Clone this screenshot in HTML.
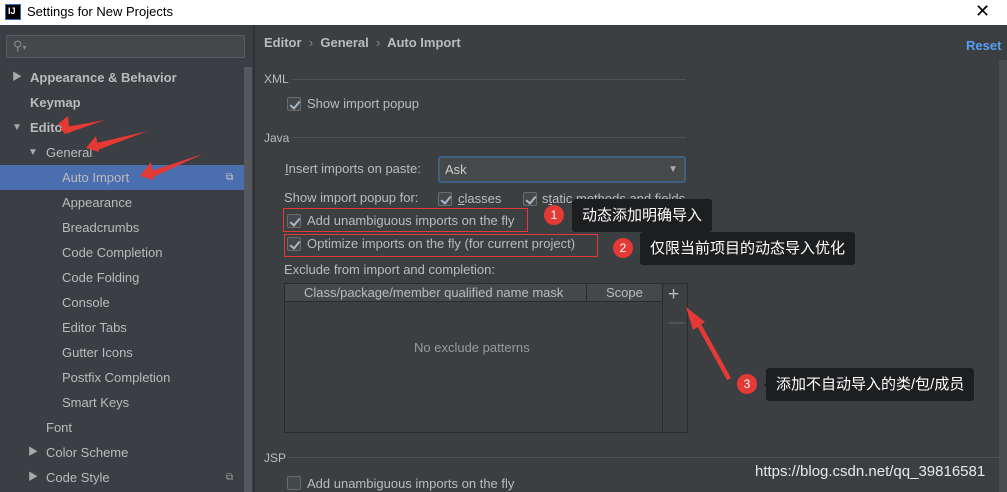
<!DOCTYPE html>
<html><head><meta charset="utf-8"><style>
*{margin:0;padding:0;box-sizing:border-box}
body{width:1007px;height:492px;overflow:hidden;background:#3c3f41;font-family:"Liberation Sans","Noto Sans CJK SC",sans-serif;font-size:13px;color:#bbbbbb;position:relative}
.a{position:absolute;white-space:nowrap}
.title{left:0;top:0;width:1007px;height:25px;background:#fff;color:#000;font-size:13px}
.side{left:0;top:25px;width:253px;height:467px;background:#3b3e43}
.row{position:absolute;left:0;width:244px;height:25px;line-height:25px}
.tri{position:absolute;font-size:10px;color:#aaa}
.cb{position:absolute;width:14px;height:14px;border:1px solid #6b6b6b;background:#43494a;border-radius:2px}
.cb.on::after{content:"";position:absolute;left:4px;top:1px;width:4px;height:8px;border:solid #a9b7c6;border-width:0 2px 2px 0;transform:rotate(40deg)}
.tip{background:#1d1e20;color:#fff;font-size:15px;border-radius:3px;height:33px;line-height:33px;padding:0 10px}
.num{width:20px;height:20px;border-radius:50%;background:#e53935;color:#fff;font-size:12px;text-align:center;line-height:20px}
.sep{height:1px;background:#4f5254}
</style></head><body>
<div class="a title">
 <div class="a" style="left:5px;top:4px;width:16px;height:16px;background:#000;border:1px solid #2f6fc0;color:#fff;font-size:9px;font-weight:bold;line-height:12px;padding-left:2px">IJ</div>
 <div class="a" style="left:27px;top:4px">Settings for New Projects</div>
 <div class="a" style="left:975px;top:1px;font-size:18px">✕</div>
</div>
<div class="a side">
 <div class="a" style="left:6px;top:10px;width:239px;height:23px;border:1px solid #5a5d60;border-radius:2px;background:#45484a;color:#888;padding-left:6px;line-height:20px">⚲<span style="font-size:8px">▾</span></div>
 <div class="a" style="left:244px;top:42px;width:8px;height:425px;background:#55585c"></div>
 <div class="row" style="top:40px"><span class="tri" style="left:12px">▶</span><b style="position:absolute;left:30px">Appearance &amp; Behavior</b></div>
 <div class="row" style="top:65px"><b style="position:absolute;left:30px">Keymap</b></div>
 <div class="row" style="top:90px"><span class="tri" style="left:12px">▼</span><b style="position:absolute;left:30px">Editor</b></div>
 <div class="row" style="top:115px"><span class="tri" style="left:28px">▼</span><span style="position:absolute;left:46px">General</span></div>
 <div class="row" style="top:140px;background:#4b6eaf;width:244px"><span style="position:absolute;left:62px">Auto Import</span><span style="position:absolute;left:226px;font-size:10px;color:#ccc">⧉</span></div>
 <div class="row" style="top:165px"><span style="position:absolute;left:62px">Appearance</span></div>
 <div class="row" style="top:190px"><span style="position:absolute;left:62px">Breadcrumbs</span></div>
 <div class="row" style="top:215px"><span style="position:absolute;left:62px">Code Completion</span></div>
 <div class="row" style="top:240px"><span style="position:absolute;left:62px">Code Folding</span></div>
 <div class="row" style="top:265px"><span style="position:absolute;left:62px">Console</span></div>
 <div class="row" style="top:290px"><span style="position:absolute;left:62px">Editor Tabs</span></div>
 <div class="row" style="top:315px"><span style="position:absolute;left:62px">Gutter Icons</span></div>
 <div class="row" style="top:340px"><span style="position:absolute;left:62px">Postfix Completion</span></div>
 <div class="row" style="top:365px"><span style="position:absolute;left:62px">Smart Keys</span></div>
 <div class="row" style="top:390px"><span style="position:absolute;left:46px">Font</span></div>
 <div class="row" style="top:415px"><span class="tri" style="left:28px">▶</span><span style="position:absolute;left:46px">Color Scheme</span></div>
 <div class="row" style="top:440px"><span class="tri" style="left:28px">▶</span><span style="position:absolute;left:46px">Code Style</span><span style="position:absolute;left:226px;font-size:10px;color:#999">⧉</span></div>
</div>
<div class="a" style="left:253px;top:25px;width:2px;height:467px;background:#2f3133"></div>
<div class="a" style="left:264px;top:35px;font-weight:bold;color:#bbb">Editor <span style="font-weight:normal;color:#888">&nbsp;›&nbsp;</span> General <span style="font-weight:normal;color:#888">&nbsp;›&nbsp;</span> Auto Import</div>
<div class="a" style="left:966px;top:38px;font-weight:bold;color:#589df6">Reset</div>
<div class="a" style="left:999px;top:60px;width:8px;height:432px;background:#4a4d50"></div>
<div class="a" style="left:264px;top:72px;font-size:12px">XML</div><div class="a sep" style="left:292px;top:79px;width:394px"></div>
<div class="cb on" style="left:287px;top:97px"></div><div class="a" style="left:307px;top:96px">Show import popup</div>
<div class="a" style="left:264px;top:131px;font-size:12px">Java</div><div class="a sep" style="left:292px;top:137px;width:394px"></div>
<div class="a" style="left:285px;top:161px"><u>I</u>nsert imports on paste:</div>
<div class="a" style="left:438px;top:156px;width:248px;height:27px;border:2px solid #3d6185;border-radius:3px;background:#45494a;padding-left:5px;line-height:23px;color:#ccc">Ask<span style="position:absolute;right:6px;font-size:10px;color:#aaa">▼</span></div>
<div class="a" style="left:284px;top:190px">Show import popup for:</div>
<div class="cb on" style="left:438px;top:192px"></div><div class="a" style="left:458px;top:191px"><u>c</u>lasses</div>
<div class="cb on" style="left:523px;top:192px"></div><div class="a" style="left:542px;top:191px">s<u>t</u>atic methods and fields</div>
<div class="a" style="left:283px;top:208px;width:245px;height:24px;border:1px solid #e53935"></div>
<div class="cb on" style="left:287px;top:214px"></div><div class="a" style="left:307px;top:213px">Add unambiguous imports on the fly</div>
<div class="a" style="left:284px;top:234px;width:314px;height:23px;border:1px solid #e53935"></div>
<div class="cb on" style="left:287px;top:237px"></div><div class="a" style="left:307px;top:236px">Optimize imports on the fly (for current project)</div>
<div class="a" style="left:284px;top:262px">Exclude from import and completion:</div>
<div class="a" style="left:284px;top:283px;width:379px;height:150px;border:1px solid #2b2b2b;background:#3c3f41"></div>
<div class="a" style="left:285px;top:284px;width:377px;height:18px;background:#45484a;border-bottom:1px solid #2b2b2b"></div>
<div class="a" style="left:304px;top:285px">Class/package/member qualified name mask</div>
<div class="a" style="left:586px;top:284px;width:1px;height:18px;background:#2b2b2b"></div>
<div class="a" style="left:606px;top:285px">Scope</div>
<div class="a" style="left:414px;top:340px;color:#999">No exclude patterns</div>
<div class="a" style="left:662px;top:283px;width:26px;height:150px;border:1px solid #2b2b2b;border-left:none"></div>
<div class="a" style="left:668px;top:284px;font-size:19px;color:#bbb">+</div>
<div class="a" style="left:669px;top:314px;font-size:16px;color:#666">—</div>
<div class="a" style="left:264px;top:451px;font-size:12px">JSP</div><div class="a sep" style="left:288px;top:457px;width:711px"></div>
<div class="cb" style="left:287px;top:476px"></div><div class="a" style="left:307px;top:476px">Add unambiguous imports on the fly</div>
<!-- annotations -->
<svg class="a" style="left:0;top:0" width="1007" height="492">
 <g fill="#e53935">
  <polygon points="105,120 60,128 65,134"/><polygon points="58,124 68,116 70,134"/>
  <polygon points="148,131 92,144 95,151"/><polygon points="86,148 96,136 99,152"/>
  <polygon points="203,154 148,172 151,178"/><polygon points="140,176 151,162 154,180"/>
  <polygon points="731,378 700,322 696,324 727,380"/><polygon points="686,307 705,322 693,330"/>
 </g>
</svg>
<div class="a num" style="left:544px;top:205px">1</div>
<div class="a" style="left:566px;top:210px;width:0;height:0;border:6px solid transparent;border-right-color:#1d1e20"></div>
<div class="a tip" style="left:572px;top:199px">动态添加明确导入</div>
<div class="a num" style="left:613px;top:238px">2</div>
<div class="a" style="left:634px;top:243px;width:0;height:0;border:6px solid transparent;border-right-color:#1d1e20"></div>
<div class="a tip" style="left:640px;top:232px">仅限当前项目的动态导入优化</div>
<div class="a num" style="left:737px;top:374px">3</div>
<div class="a" style="left:758px;top:379px;width:0;height:0;border:6px solid transparent;border-right-color:#1d1e20"></div>
<div class="a tip" style="left:766px;top:368px">添加不自动导入的类/包/成员</div>
<div class="a" style="left:755px;top:463px;font-size:15px;color:#e8e8e8">https://blog.csdn.net/qq_39816581</div>
</body></html>
